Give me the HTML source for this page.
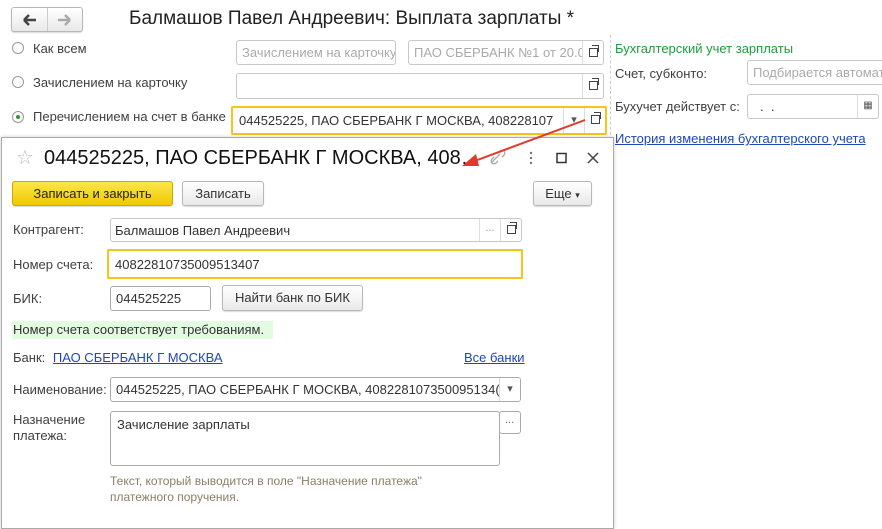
<!DOCTYPE html>
<html><head><meta charset="utf-8"><style>
body{margin:0;width:882px;height:515px;overflow:hidden;background:#fff;font-family:"Liberation Sans",Arial,sans-serif;font-size:13px;color:#404040;position:relative}
.a{position:absolute;white-space:nowrap}
.f{position:absolute;border:1px solid #c8c8c8;border-radius:3px;background:#fff;box-sizing:border-box;overflow:hidden;white-space:nowrap;padding:4px 5px;color:#333}
.ph{color:#aaa}
.btn{position:absolute;border:1px solid #b8b8b8;border-radius:3px;background:linear-gradient(#fff,#e9e9e9);box-sizing:border-box;text-align:center;color:#333;box-shadow:0 1px 1px rgba(0,0,0,.15)}
.sb{position:absolute;top:0;bottom:0;border-left:1px solid #ddd;width:20px;text-align:center;color:#555;font-size:11px;line-height:22px}
.radio{position:absolute;width:12px;height:12px;border:1px solid #999;border-radius:50%;box-sizing:border-box;background:#fff}
a{color:#2046b8;text-decoration:underline}
.cp{display:inline-block;width:7px;height:7px;border:1px solid #444;position:relative;margin-top:7px}
.cp:after{content:"";position:absolute;left:2px;top:-4px;width:6px;height:6px;border-top:1px solid #444;border-right:1px solid #444}
</style></head><body>
<div class="btn" style="left:11px;top:7px;width:72px;height:25px"></div>
<div class="a" style="left:47px;top:8px;height:23px;border-left:1px solid #ccc"></div>
<svg class="a" style="left:20px;top:12px" width="60" height="16"><path d="M4 8h12M4 8l5-5M4 8l5 5" stroke="#444" stroke-width="2.5" fill="none"/><path d="M50 8H38M50 8l-5-5M50 8l-5 5" stroke="#aaa" stroke-width="2.5" fill="none"/></svg>
<div class="a" style="left:129px;top:8px;font-size:19px;color:#222">Балмашов Павел Андреевич: Выплата зарплаты *</div>

<div class="radio" style="left:12px;top:42px"></div><div class="a" style="left:33px;top:41px">Как всем</div>
<div class="radio" style="left:12px;top:76px"></div><div class="a" style="left:33px;top:75px">Зачислением на карточку</div>
<div class="radio" style="left:12px;top:111px"></div><div class="a" style="left:16px;top:115px;width:4px;height:4px;border-radius:50%;background:#3a8f3a"></div><div class="a" style="left:33px;top:109px">Перечислением на счет в банке</div>

<div class="f ph" style="left:236px;top:40px;width:160px;height:25px">Зачислением на карточку</div>
<div class="f ph" style="left:408px;top:40px;width:196px;height:25px">ПАО СБЕРБАНК №1 от 20.0<div class="sb" style="right:0;background:#fff"><span class="cp"></span></div></div>
<div class="f" style="left:236px;top:73px;width:368px;height:26px"><div class="sb" style="right:0"><span class="cp"></span></div></div>
<div class="f" style="left:231px;top:106px;width:376px;height:29px;border:2px solid #f5c518;border-radius:2px;padding:5px 6px">044525225, ПАО СБЕРБАНК Г МОСКВА, 408228107<div class="sb" style="right:21px;background:#fff;line-height:25px">▾</div><div class="sb" style="right:0;background:#fff;line-height:25px"><span class="cp"></span></div></div>

<div class="a" style="left:610px;top:35px;height:110px;border-left:1px dashed #ccc"></div>
<div class="a" style="left:615px;top:41px;color:#1f9d3a">Бухгалтерский учет зарплаты</div>
<div class="a" style="left:615px;top:66px">Счет, субконто:</div>
<div class="f ph" style="left:747px;top:60px;width:140px;height:25px">Подбирается автоматически</div>
<div class="a" style="left:615px;top:99px">Бухучет действует с:</div>
<div class="f" style="left:747px;top:94px;width:132px;height:25px;padding-left:12px">.&nbsp;&nbsp;.<div class="sb" style="right:0;font-size:10px">▦</div></div>
<div class="a" style="left:615px;top:131px"><a>История изменения бухгалтерского учета</a></div>

<div class="a" style="left:1px;top:137px;width:611px;height:390px;border:1px solid #aaa;background:#fff;box-shadow:0 0 4px rgba(0,0,0,.2)"></div>
<div class="a" style="left:16px;top:145px;font-size:20px;color:#bbb">☆</div>
<div class="a" style="left:44px;top:147px;font-size:20px;color:#111">044525225, ПАО СБЕРБАНК Г МОСКВА, 408…</div>
<svg class="a" style="left:489px;top:149px" width="110" height="18"><path d="M3 13l8-8M5 8l-2 2a2.8 2.8 0 0 0 4 4l2-2M9 4l2-2a2.8 2.8 0 0 1 4 4l-2 2" stroke="#aaa" stroke-width="1.3" fill="none"/><circle cx="42" cy="4" r="1.2" fill="#777"/><circle cx="42" cy="9" r="1.2" fill="#777"/><circle cx="42" cy="14" r="1.2" fill="#777"/><rect x="68" y="4.5" width="9" height="9" stroke="#333" stroke-width="1.5" fill="none"/><path d="M99 4l10 10M109 4L99 14" stroke="#444" stroke-width="1.5"/></svg>

<div class="btn" style="left:12px;top:181px;width:161px;height:25px;background:linear-gradient(#fbe64a,#f0c800);border-color:#cfa800;line-height:23px;color:#222">Записать и закрыть</div>
<div class="btn" style="left:182px;top:181px;width:82px;height:25px;line-height:23px">Записать</div>
<div class="btn" style="left:533px;top:181px;width:59px;height:25px;line-height:23px">Еще <span style="font-size:9px">▾</span></div>

<div class="a" style="left:13px;top:222px">Контрагент:</div>
<div class="f" style="left:110px;top:218px;width:412px;height:24px;padding:4px 4px">Балмашов Павел Андреевич<div class="sb" style="right:21px;color:#999;line-height:18px">...</div><div class="sb" style="right:0"><span class="cp" style="margin-top:6px"></span></div></div>
<div class="a" style="left:13px;top:257px">Номер счета:</div>
<div class="f" style="left:107px;top:249px;width:416px;height:30px;border:2px solid #f5c518;border-radius:1px;padding:6px 6px">40822810735009513407</div>
<div class="a" style="left:13px;top:291px">БИК:</div>
<div class="f" style="left:110px;top:286px;width:101px;height:25px;border-color:#aaa">044525225</div>
<div class="btn" style="left:222px;top:285px;width:141px;height:26px;line-height:24px">Найти банк по БИК</div>
<div class="a" style="left:12px;top:321px;width:260px;height:18px;background:#e3fbe0;line-height:18px;padding-left:1px;color:#333">Номер счета соответствует требованиям.</div>
<div class="a" style="left:13px;top:350px">Банк: <a style="margin-left:4px">ПАО СБЕРБАНК Г МОСКВА</a></div>
<div class="a" style="left:464px;top:350px"><a>Все банки</a></div>
<div class="a" style="left:13px;top:382px">Наименование:</div>
<div class="f" style="left:110px;top:377px;width:411px;height:25px;border-color:#aaa;padding:4px 5px">044525225, ПАО СБЕРБАНК Г МОСКВА, 408228107350095134(<div class="sb" style="right:0;background:#fff;line-height:22px">▾</div></div>
<div class="a" style="left:13px;top:412px;line-height:16px">Назначение<br>платежа:</div>
<div class="f" style="left:110px;top:411px;width:390px;height:55px;border-color:#aaa;padding:5px 6px">Зачисление зарплаты</div>
<div class="f" style="left:499px;top:411px;width:22px;height:23px;border-color:#aaa;padding:2px 5px;color:#666;font-size:11px">...</div>
<div class="a" style="left:110px;top:473px;font-size:12px;color:#8a7f66;line-height:16px">Текст, который выводится в поле "Назначение платежа"<br>платежного поручения.</div>

<svg class="a" style="left:0;top:0" width="882" height="515"><line x1="585" y1="120" x2="472" y2="162" stroke="#e03a2a" stroke-width="2"/><polygon points="462,166 476,154 479,166" fill="#e03a2a"/></svg>
</body></html>
